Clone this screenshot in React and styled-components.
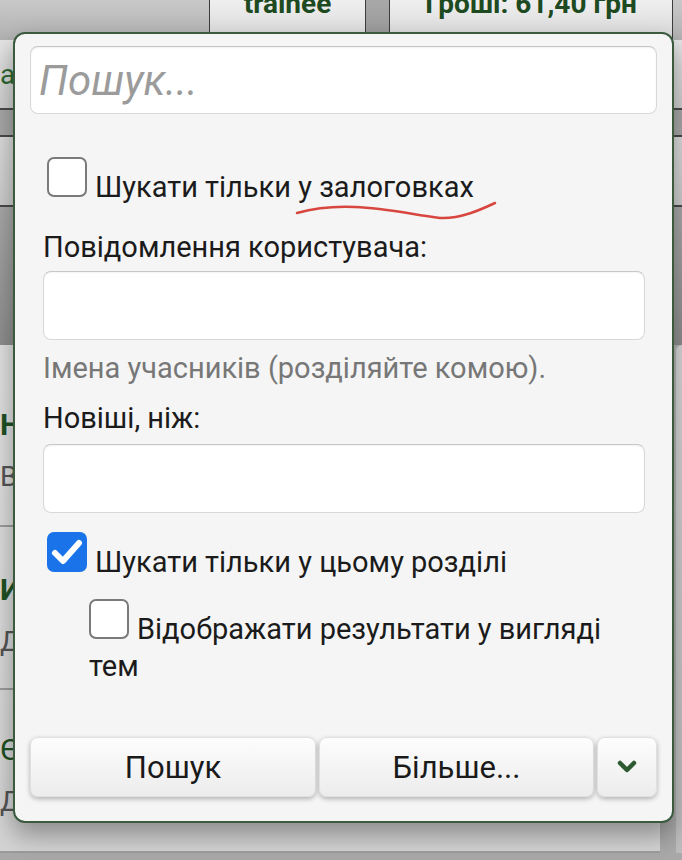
import React from "react";
import styled, { createGlobalStyle } from "styled-components";

const Global = createGlobalStyle`
  html, body { margin: 0; padding: 0; }
  body {
    width: 682px; height: 860px; overflow: hidden;
    font-family: Roboto, "Noto Sans", "DejaVu Sans", sans-serif;
  }
  * { box-sizing: border-box; }
`;

const Page = styled.div`
  position: relative;
  width: 682px;
  height: 860px;
  overflow: hidden;
  display: flex;
  flex-direction: column;
  background: linear-gradient(#bdbdbd, #a9a9a9);
`;

/* ---------- background page ---------- */
const TopBar = styled.div`
  display: flex;
  height: 40px;
  flex-shrink: 0;
  background: linear-gradient(#c8c8c8, #b2b2b2);
`;
const TopFill = styled.div`
  width: ${(p) => p.$w}px;
  flex-shrink: 0;
`;
const Tab = styled.div`
  width: ${(p) => p.$w}px;
  flex-shrink: 0;
  border-left: 1px solid #3c3c3c;
  border-right: 1px solid #3c3c3c;
  background: linear-gradient(#efefef, #d9d9d9);
  display: flex;
  justify-content: center;
  overflow: hidden;
  color: #1d4a20;
  font-weight: 700;
  font-size: 28px;
  line-height: 8px;
  white-space: nowrap;
`;
const TabGap = styled.div`
  width: 23px;
  flex-shrink: 0;
  background: linear-gradient(#a8a8a8, #989898);
`;
const Band = styled.div`
  height: ${(p) => p.$h}px;
  flex-shrink: 0;
  background: ${(p) => p.$bg};
  border-bottom: ${(p) => (p.$line ? "2px solid #4a4a4a" : "none")};
  display: flex;
  align-items: center;
  font-size: 28px;
  color: #2e6a33;
  white-space: nowrap;
`;
const PanelArea = styled.div`
  height: 508px;
  flex-shrink: 0;
  display: flex;
`;
const ListPanel = styled.div`
  width: 660px;
  flex-shrink: 0;
  background: linear-gradient(#e2e2e2, #d4d4d4);
  display: flex;
  flex-direction: column;
`;
const SidePanel = styled.div`
  flex: 1;
  margin-left: 16px;
  border-top-left-radius: 8px;
  background: linear-gradient(#d9d9d9, #bdbdbd);
`;
const ListItem = styled.div`
  height: ${(p) => p.$h}px;
  padding-top: ${(p) => p.$pt}px;
  border-bottom: 2px solid #9c9c9c;
  display: flex;
  flex-direction: column;
  gap: 16px;
  white-space: nowrap;
`;
const ItemTitle = styled.div`
  font-size: 30px;
  line-height: 36px;
  font-weight: ${(p) => (p.$bold ? 700 : 400)};
  color: #1f5223;
`;
const ItemSub = styled.div`
  font-size: 28px;
  line-height: 36px;
  color: #555;
`;

/* ---------- popup ---------- */
const Popup = styled.div`
  position: absolute;
  left: 13px;
  top: 32px;
  width: 661px;
  height: 791px;
  border: 2px solid #3b5a3e;
  border-radius: 12px;
  background: #f5f5f5;
  box-shadow: 0 12px 26px rgba(0, 0, 0, 0.35);
  display: flex;
  flex-direction: column;
  font-size: 29px;
  line-height: 37px;
  color: #1b1b1b;
`;
const SearchInput = styled.input`
  display: block;
  margin: 12px 15px 0 15px;
  height: 68px;
  border: 1px solid #d8d8d8;
  border-top-color: #c4c4c4;
  border-radius: 8px;
  background: #fff;
  box-shadow: inset 0 1px 2px rgba(0, 0, 0, 0.06);
  padding: 0 8px;
  font-family: Roboto, sans-serif;
  font-size: 42px;
  font-style: italic;
  outline: none;
  &::placeholder { color: #9b9b9b; }
`;
const Body = styled.div`
  padding: 0 27px 0 28px;
  display: flex;
  flex-direction: column;
`;
const CheckRow = styled.label`
  display: block;
  margin-top: ${(p) => p.$mt}px;
  margin-left: ${(p) => p.$indent || 0}px;
`;
const Box = styled.span`
  display: inline-block;
  width: 40px;
  height: 40px;
  overflow: hidden;
  vertical-align: baseline;
  margin-left: ${(p) => p.$ml}px;
  margin-right: 8px;
  border-radius: 7px;
  border: 2px solid ${(p) => (p.$checked ? "#1a73e8" : "#7a7a7a")};
  background: ${(p) => (p.$checked ? "#1a73e8" : "#fff")};
  svg { display: block; }
`;
const Label = styled.div`
  margin-top: ${(p) => p.$mt}px;
  color: ${(p) => (p.$hint ? "#777" : "#1b1b1b")};
`;
const Field = styled.input`
  display: block;
  margin-top: ${(p) => p.$mt}px;
  width: 100%;
  height: 69px;
  border: 1px solid #d8d8d8;
  border-top-color: #c6c6c6;
  border-radius: 8px;
  background: #fff;
  box-shadow: inset 0 1px 2px rgba(0, 0, 0, 0.05);
  outline: none;
`;
const Buttons = styled.div`
  margin: auto 15px 24px 15px;
  display: grid;
  grid-template-columns: 286px 1fr 60px;
  gap: 3px;
`;
const Button = styled.button`
  height: 60px;
  border: 1px solid #e0e0e0;
  border-radius: 8px;
  background: linear-gradient(#fdfdfd, #ececec);
  box-shadow: 0 2px 5px rgba(0, 0, 0, 0.28);
  font-family: Roboto, sans-serif;
  font-size: 31px;
  color: #1a1a1a;
  display: flex;
  align-items: center;
  justify-content: center;
  padding: 0;
`;
const Squiggle = styled.svg`
  position: absolute;
  left: 265px;
  top: 161px;
  pointer-events: none;
`;

const Check = ({ checked, ml = 0 }) => (
  <Box $checked={checked} $ml={ml}>
    {checked && (
      <svg width="36" height="36" viewBox="0 0 36 36">
        <polyline
          points="6,19 14,27 30,9"
          fill="none"
          stroke="#fff"
          strokeWidth="6"
          strokeLinecap="round"
          strokeLinejoin="round"
        />
      </svg>
    )}
  </Box>
);

export default function App() {
  return (
    <>
      <Global />
      <Page>
        <TopBar>
          <TopFill $w={209} />
          <Tab $w={157}>trainee</Tab>
          <TabGap />
          <Tab $w={284}>Гроші: 61,40 грн</Tab>
        </TopBar>
        <Band $h={70} $line $bg="linear-gradient(#e6e6e6, #d0d0d0)">а</Band>
        <Band $h={27} $line $bg="#a8a8a8" />
        <Band $h={70} $line $bg="linear-gradient(#dcdcdc, #cdcdcd)" />
        <Band $h={138} $bg="linear-gradient(#a9a9a9, #8e8e8e)" />
        <PanelArea>
          <ListPanel>
            <ListItem $h={182} $pt={62}>
              <ItemTitle $bold>Нове на форумі</ItemTitle>
              <ItemSub>Всі розділи</ItemSub>
            </ListItem>
            <ListItem $h={163} $pt={45}>
              <ItemTitle $bold>Ивенти</ItemTitle>
              <ItemSub>Допомога</ItemSub>
            </ListItem>
            <ListItem $h={163} $pt={42}>
              <ItemTitle>Єдиний чат</ItemTitle>
              <ItemSub>Для всіх</ItemSub>
            </ListItem>
          </ListPanel>
          <SidePanel />
        </PanelArea>

        <Popup>
          <SearchInput placeholder="Пошук..." />
          <Body>
            <CheckRow $mt={43}>
              <Check ml={4} />
              Шукати тільки у залоговках
            </CheckRow>
            <Label $mt={23}>Повідомлення користувача:</Label>
            <Field $mt={5} />
            <Label $mt={10} $hint>
              Імена учасників (розділяйте комою).
            </Label>
            <Label $mt={13}>Новіші, ніж:</Label>
            <Field $mt={7} />
            <CheckRow $mt={19}>
              <Check checked ml={4} />
              Шукати тільки у цьому розділі
            </CheckRow>
            <CheckRow $mt={18} $indent={46}>
              <Check ml={0} />
              Відображати результати у вигляді тем
            </CheckRow>
          </Body>
          <Buttons>
            <Button>Пошук</Button>
            <Button>Більше...</Button>
            <Button aria-label="more">
              <svg width="20" height="14" viewBox="0 0 20 14">
                <polyline
                  points="3,3 10,10 17,3"
                  fill="none"
                  stroke="#2d5a30"
                  strokeWidth="4.5"
                  strokeLinecap="round"
                  strokeLinejoin="round"
                />
              </svg>
            </Button>
          </Buttons>
          <Squiggle width="230" height="30" viewBox="0 0 230 30">
            <path
              d="M17 18 C35 13, 55 11, 75 12 C105 13, 130 19, 160 23 C180 24, 200 15, 215 8"
              fill="none"
              stroke="#d8473f"
              strokeWidth="2.5"
              strokeLinecap="round"
            />
          </Squiggle>
        </Popup>
      </Page>
    </>
  );
}
